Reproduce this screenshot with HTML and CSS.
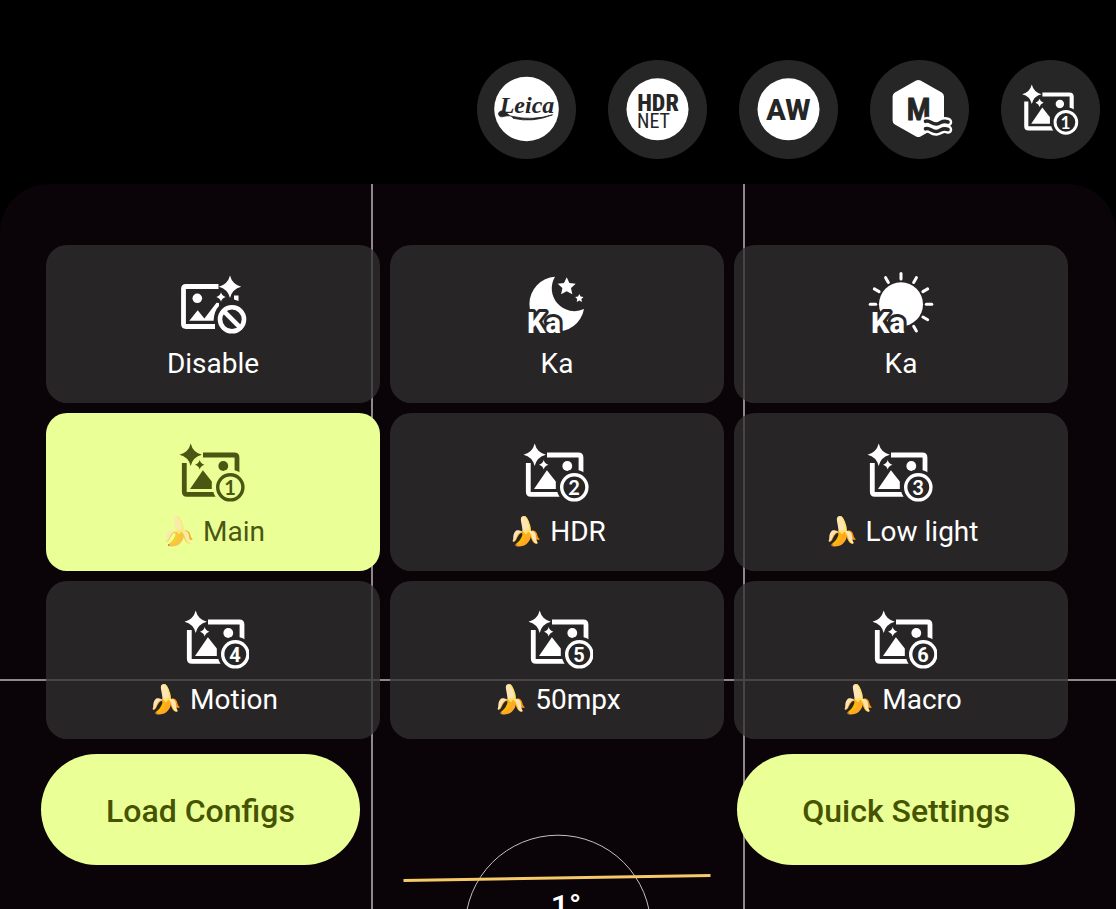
FILE: index.html
```html
<!DOCTYPE html>
<html lang="en">
<head>
<meta charset="utf-8">
<meta name="viewport" content="width=device-width, initial-scale=1">
<title>Camera configs</title>
<link rel="stylesheet" href="styles.css">
</head>
<body>
<svg class="defs" aria-hidden="true">
  <defs>
    <mask id="badge-cut" maskUnits="userSpaceOnUse" x="0" y="0" width="72" height="72">
      <rect width="72" height="72" fill="#fff"/>
      <circle cx="53.3" cy="50.3" r="17.6" fill="#000"/>
    </mask>
    <symbol id="picture" viewBox="0 0 72 72">
      <path d="M13.7 6.5Q15.9 15.500 24.9 17.7Q15.9 19.900 13.7 28.9Q11.500 19.900 2.5 17.7Q11.500 15.500 13.7 6.5Z" fill="currentColor"/>
      <path d="M22.7 23Q23.7 26.7 27.4 27.7Q23.7 28.7 22.7 32.4Q21.7 28.7 18 27.7Q21.7 26.7 22.7 23Z" fill="currentColor"/>
      <g mask="url(#badge-cut)">
        <path d="M26 18H57.3Q60 18 60 20.7V36M7.3 26V54.8Q7.3 57.4 9.9 57.4H40" fill="none" stroke="currentColor" stroke-width="4.8"/>
        <circle cx="46.3" cy="29" r="4.9" fill="currentColor"/>
        <path d="M13 52L25.9 33.2L34.8 44.5V52Z" fill="currentColor"/>
      </g>
      <circle cx="53.3" cy="50.3" r="12.6" fill="none" stroke="currentColor" stroke-width="3.4"/>
    </symbol>
  </defs>
</svg>

<header class="topbar">
  <button class="round" type="button" aria-label="Leica">
    <svg viewBox="0 0 99 99" aria-hidden="true">
      <circle cx="49.5" cy="49" r="32.3" fill="#fff"/>
      <text class="script" x="50" y="53" text-anchor="middle">Leica</text>
      <path d="M28 51C23 50 20 53 22 55.500C25 59 28 54 36 56.500Q56 61 75.500 54.800Q56 63 36 58.300" fill="#262626" stroke="#262626" stroke-width=".8"/>
    </svg>
  </button>
  <button class="round" type="button" aria-label="HDR NET">
    <svg viewBox="0 0 99 99" aria-hidden="true">
      <circle cx="49.500" cy="49.300" r="31" fill="#fff"/>
      <text class="hdr" x="50" y="51" text-anchor="middle">HDR</text>
      <text class="net" x="29" y="68">NET</text>
    </svg>
  </button>
  <button class="round" type="button" aria-label="AW">
    <svg viewBox="0 0 99 99" aria-hidden="true">
      <circle cx="49.500" cy="49.300" r="31" fill="#fff"/>
      <text class="aw" x="49.500" y="60" text-anchor="middle">AW</text>
    </svg>
  </button>
  <button class="round" type="button" aria-label="M">
    <svg viewBox="0 0 99 99" aria-hidden="true">
      <path d="M48.300 24.500L69.500 36.500V60.500L48.300 72.500L27.100 60.500V36.500Z" fill="#fff" stroke="#fff" stroke-width="9" stroke-linejoin="round"/>
      <text class="em" x="48.500" y="60" text-anchor="middle">M</text>
      <g fill="none" stroke-linecap="round">
        <path d="M57 61C60 60 62 64.500 66.500 64S72 59.500 78 62M57 68.500C60 67.500 62 72 66.500 71.500S72 67 78 69.500" stroke="#fff" stroke-width="8.500"/>
        <path d="M55.500 61.300C60 59.800 62 64.500 66.500 64S72 59.500 78 62M55.500 68.800C60 67.300 62 72 66.500 71.500S72 67 78 69.500" stroke="#262626" stroke-width="3.600"/>
      </g>
    </svg>
  </button>
  <button class="round" type="button" aria-label="Config 1">
    <svg class="small" viewBox="0 0 72 72" aria-hidden="true"><use href="#picture"/><text class="digit" x="53" y="57.500">1</text></svg>
  </button>
</header>

<main class="finder">
  <span class="line v1"></span>
  <span class="line v2"></span>
  <span class="line h"></span>
  <svg class="level" viewBox="0 0 320 75" role="img" aria-label="Level 1°">
    <circle cx="160" cy="94" r="92.800" fill="none" stroke="#c4bfc2" stroke-width="1"/>
    <path d="M5.500 46.500L312.500 41.500" stroke="#f6ca68" stroke-width="3"/>
    <text x="168" y="83" text-anchor="middle">1°</text>
  </svg>

  <div class="configs">
    <button class="cell" type="button">
      <svg class="icon" viewBox="0 0 72 72" aria-hidden="true">
        <path d="M41.500 17.500H9Q6.500 17.500 6.500 20V55Q6.500 57.500 9 57.500H38" fill="none" stroke="currentColor" stroke-width="4.800"/>
        <circle cx="20.300" cy="29.300" r="4.800" fill="currentColor"/>
        <path d="M12.300 51.700L20.700 41.300L27.400 49.500L39.500 33.800L42 34V37Q37 42 36.600 51.700Z" fill="currentColor"/>
        <path d="M53 6.500Q55.300 15.400 64.200 17.700Q55.300 20 53 28.900Q50.700 20 41.800 17.700Q50.700 15.400 53 6.500Z" fill="currentColor"/>
        <path d="M44 23.300Q45 27 48.700 28Q45 29 44 32.700Q43 29 39.300 28Q43 27 44 23.300Z" fill="currentColor"/>
        <path d="M57 26.500H61.500V32L57 30.500Z" fill="currentColor"/>
        <circle cx="55" cy="50.300" r="12" fill="none" stroke="currentColor" stroke-width="4.600"/>
        <path d="M47 42.300L63 58.300" stroke="currentColor" stroke-width="4.600"/>
      </svg>
      <span class="label">Disable</span>
    </button>
    <button class="cell" type="button">
      <svg class="icon" viewBox="0 0 72 72" aria-hidden="true">
        <path d="M34 7.700A27.500 27.500 0 1 0 63 40A22.700 22.700 0 0 1 34 7.700Z" fill="currentColor"/>
        <path d="M45.700 8.300L48.400 14.100L54.700 14.800L50 19.100L51.300 25.300L45.700 22.200L40.100 25.300L41.400 19.100L36.700 14.800L43 14.100Z" fill="currentColor"/>
        <path d="M58.300 25L59.600 27.600L62.500 28L60.400 30L60.900 32.900L58.300 31.500L55.700 32.900L56.200 30L54.100 28L57 27.600Z" fill="currentColor"/>
        <text class="ka" x="6" y="64">Ka</text>
      </svg>
      <span class="label">Ka</span>
    </button>
    <button class="cell" type="button">
      <svg class="icon" viewBox="0 0 72 72" aria-hidden="true">
        <circle cx="36" cy="35.300" r="22" fill="currentColor"/>
        <g stroke="currentColor" stroke-width="3" stroke-linecap="round">
          <path id="ray" d="M36 10V4.500"/>
          <use href="#ray" transform="rotate(30 36 35.300)"/>
          <use href="#ray" transform="rotate(60 36 35.300)"/>
          <use href="#ray" transform="rotate(90 36 35.300)"/>
          <use href="#ray" transform="rotate(120 36 35.300)"/>
          <use href="#ray" transform="rotate(150 36 35.300)"/>
          <use href="#ray" transform="rotate(-30 36 35.300)"/>
          <use href="#ray" transform="rotate(-60 36 35.300)"/>
          <use href="#ray" transform="rotate(-90 36 35.300)"/>
        </g>
        <text class="ka" x="6" y="64">Ka</text>
      </svg>
      <span class="label">Ka</span>
    </button>
    <button class="cell active" type="button" aria-pressed="true">
      <svg class="icon" viewBox="0 0 72 72" aria-hidden="true"><use href="#picture"/><text class="digit" x="53" y="57.500">1</text></svg>
      <span class="label"><span class="emoji">🍌</span> Main</span>
    </button>
    <button class="cell" type="button">
      <svg class="icon" viewBox="0 0 72 72" aria-hidden="true"><use href="#picture"/><text class="digit" x="53" y="57.500">2</text></svg>
      <span class="label"><span class="emoji">🍌</span> HDR</span>
    </button>
    <button class="cell" type="button">
      <svg class="icon" viewBox="0 0 72 72" aria-hidden="true"><use href="#picture"/><text class="digit" x="53" y="57.500">3</text></svg>
      <span class="label"><span class="emoji">🍌</span> Low light</span>
    </button>
    <button class="cell" type="button">
      <svg class="icon" viewBox="-5 1 72 72" aria-hidden="true"><use href="#picture" width="72" height="72"/><text class="digit bold" x="53" y="57.500">4</text></svg>
      <span class="label"><span class="emoji">🍌</span> Motion</span>
    </button>
    <button class="cell" type="button">
      <svg class="icon" viewBox="-5 1 72 72" aria-hidden="true"><use href="#picture" width="72" height="72"/><text class="digit bold" x="53" y="57.500">5</text></svg>
      <span class="label"><span class="emoji">🍌</span> 50mpx</span>
    </button>
    <button class="cell" type="button">
      <svg class="icon" viewBox="-5 1 72 72" aria-hidden="true"><use href="#picture" width="72" height="72"/><text class="digit bold" x="53" y="57.500">6</text></svg>
      <span class="label"><span class="emoji">🍌</span> Macro</span>
    </button>
  </div>

  <div class="actions">
    <button class="pill" type="button">Load Configs</button>
    <button class="pill" type="button">Quick Settings</button>
  </div>
</main>
</body>
</html>
```

FILE: styles.css
```css
* {
  box-sizing: border-box;
}

body {
  margin: 0;
  min-height: 100vh;
  display: flex;
  flex-direction: column;
  background: #000;
  color: #fff;
  font-family: Roboto, "Noto Sans", sans-serif;
}

button {
  border: 0;
  padding: 0;
  color: inherit;
  font: inherit;
  cursor: pointer;
}

.defs {
  position: absolute;
  width: 0;
  height: 0;
}

.topbar {
  display: flex;
  justify-content: flex-end;
  gap: 32px;
  padding: 60px 16px 25px;
}

.round {
  display: grid;
  place-items: center;
  width: 99px;
  height: 99px;
  border-radius: 50%;
  background: #262626;
}

.round svg {
  display: block;
  width: 100%;
}

.round .small {
  width: 62px;
}

.round text {
  fill: #262626;
}

.round .digit,
.digit {
  fill: currentColor;
  font: 700 20px Lato, sans-serif;
  text-anchor: middle;
}

.digit.bold {
  font: 700 20px Roboto, sans-serif;
}

.script {
  font: italic 700 24px "Liberation Serif", serif;
}

.hdr {
  font: 800 24px "Roboto Condensed", "Liberation Sans Narrow", Roboto, sans-serif;
}

.net {
  font: 400 20px "Roboto Condensed", "Liberation Sans Narrow", Roboto, sans-serif;
}

.aw {
  font: 800 29px Roboto, sans-serif;
}

.em {
  font: 500 32px "Roboto Condensed", "Liberation Sans Narrow", Roboto, sans-serif;
  stroke: #262626;
  stroke-width: 1;
  stroke-linejoin: round;
}

.ka {
  font: 800 29px Roboto, sans-serif;
  fill: currentColor;
  stroke: #282627;
  stroke-width: 6;
  stroke-linejoin: round;
  paint-order: stroke;
}

.finder {
  position: relative;
  flex: 1;
  overflow: hidden;
  padding: 61px 0 44px;
  border-radius: 48px 48px 0 0;
  background: #0a0308;
}

.line {
  position: absolute;
  background: #8f878b;
}

.v1,
.v2 {
  top: 0;
  bottom: 0;
  width: 2px;
}

.v1 {
  left: calc(100% / 3 - 1px);
}

.v2 {
  left: calc(200% / 3 - 1px);
}

.h {
  top: 495px;
  left: 0;
  right: 0;
  height: 2px;
}

.level {
  position: absolute;
  bottom: 0;
  left: calc(50% - 160px);
  width: 320px;
  height: 75px;
}

.level text {
  fill: #fff;
  font: 500 32px Roboto, sans-serif;
}

.configs {
  position: relative;
  display: grid;
  grid-template-columns: repeat(3, 1fr);
  gap: 10px;
  padding: 0 48px 0 46px;
}

.cell {
  display: flex;
  flex-direction: column;
  align-items: center;
  gap: 6px;
  padding: 24px 0 22px;
  border-radius: 21px;
  background: rgba(50, 49, 49, 0.76);
}

.active {
  background: #eaff96;
  color: #4a5712;
}

.icon {
  width: 72px;
  height: 72px;
}

.label {
  font-size: 28px;
  line-height: 34px;
  white-space: pre;
}

.active .emoji {
  opacity: 0.7;
}

.actions {
  position: relative;
  display: flex;
  justify-content: space-between;
  padding: 15px 41px 0;
}

.pill {
  padding: 38px 65px 35px;
  border-radius: 56px;
  background: #eaff96;
  color: #465300;
  font-size: 32px;
  font-weight: 500;
  line-height: 38px;
}
```
